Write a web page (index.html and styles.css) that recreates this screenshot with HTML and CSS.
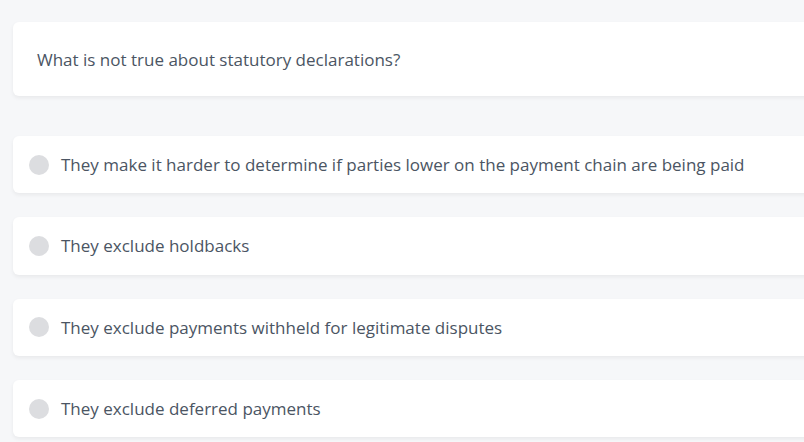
FILE: index.html
```html
<!DOCTYPE html>
<html>
<head>
<meta charset="utf-8">
<link rel="stylesheet" href="styles.css">
</head>
<body>
<div class="quiz">
  <div class="card question">What is not true about statutory declarations?</div>
  <div class="options">
    <div class="card option"><span class="radio"></span><span class="label">They make it harder to determine if parties lower on the payment chain are being paid</span></div>
    <div class="card option"><span class="radio"></span><span class="label">They exclude holdbacks</span></div>
    <div class="card option"><span class="radio"></span><span class="label">They exclude payments withheld for legitimate disputes</span></div>
    <div class="card option"><span class="radio"></span><span class="label">They exclude deferred payments</span></div>
  </div>
</div>
</body>
</html>
```
FILE: styles.css
```css
html, body {
  margin: 0;
  padding: 0;
  background: #f6f7f9;
  overflow: hidden;
}
body {
  font-family: "Open Sans", "Noto Sans", sans-serif;
  color: #4b5563;
  width: 804px;
  height: 442px;
}
.quiz {
  padding: 22px 0 0 13px;
  width: 820px;
}
.card {
  background: #ffffff;
  border-radius: 6px;
  box-shadow: 0 2px 4px rgba(0, 0, 0, 0.06);
}
.question {
  height: 74px;
  box-sizing: border-box;
  padding: 0 24px;
  display: flex;
  align-items: center;
  font-size: 17px;
}
.options {
  margin-top: 40px;
  display: flex;
  flex-direction: column;
  gap: 24px;
}
.option {
  height: 57.33px;
  box-sizing: border-box;
  padding: 0 16px;
  display: flex;
  align-items: center;
  gap: 12px;
  font-size: 17px;
}
.radio {
  width: 20px;
  height: 20px;
  border-radius: 50%;
  background: #dcdde0;
  flex: none;
}
```
